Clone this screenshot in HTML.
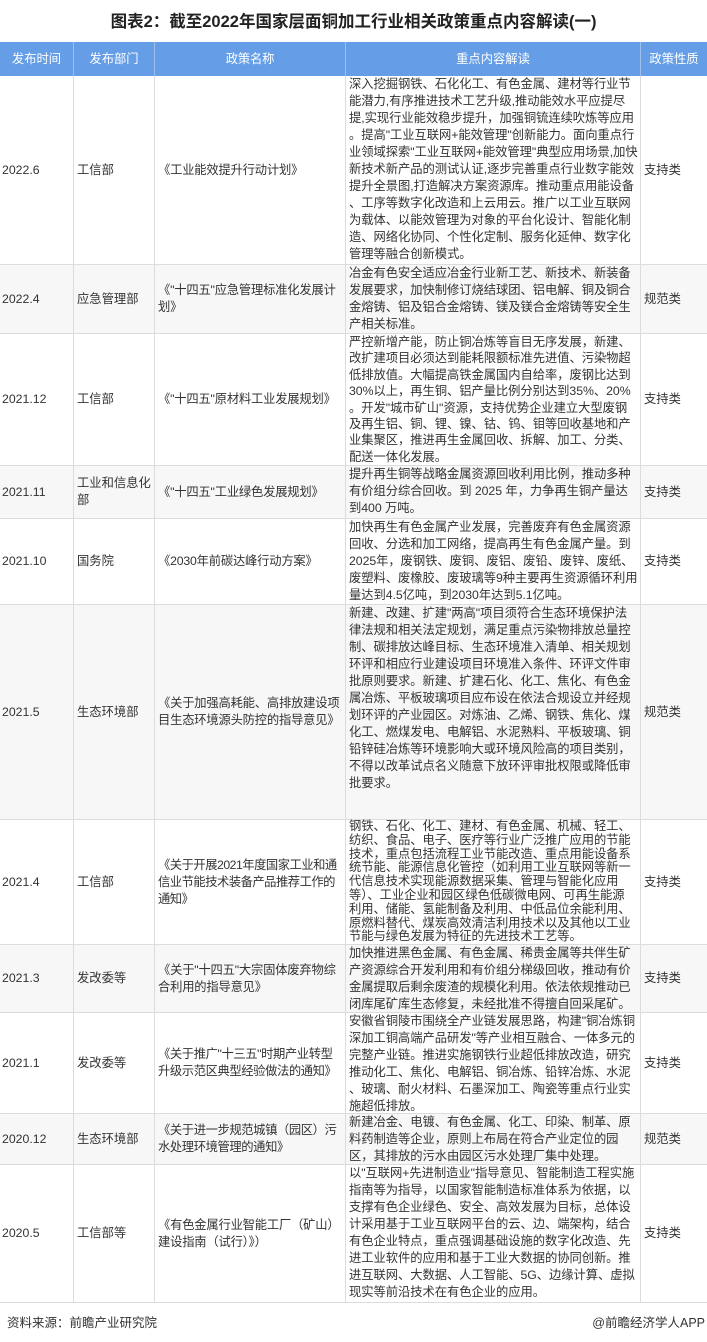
<!DOCTYPE html>
<html><head><meta charset="utf-8">
<style>
*{margin:0;padding:0;box-sizing:border-box}
body{width:707px;height:1342px;background:#fff;font-family:"Liberation Sans","Noto Sans CJK SC",sans-serif;color:#333;position:relative;overflow:hidden}
.title{position:absolute;top:8px;left:0;width:707px;text-align:center;font-size:16.5px;font-weight:bold;color:#222}
.row{position:absolute;left:0;width:707px;border-bottom:1px solid #dcdcdc}
.row.g{background:#f7f7f7}
.c{position:absolute;top:0;height:100%;border-left:1px solid #dcdcdc;display:flex;align-items:center;font-size:12.3px;line-height:17px;padding-left:3px}
.c.f{border-left:none;padding-left:2px}
.c3{white-space:nowrap;letter-spacing:-0.2px}
.c.t{align-items:flex-start;padding-top:0px;padding-left:3px;letter-spacing:-0.05px;white-space:nowrap}
.hd{background:#659ee6;color:#fff;font-size:12.5px;border-bottom:none}
.hd .c{justify-content:center;border-left:1px solid #9cc0f0;padding:0}
.hd .c.f{border-left:none}
.c1{left:0;width:73px}.c2{left:73px;width:81px}.c3{left:154px;width:191px}.c4{left:345px;width:295px}.c5{left:640px;width:67px}
.foot{position:absolute;top:1312px;font-size:12.5px;color:#333}
</style></head><body>
<div class="title">图表2：截至2022年国家层面铜加工行业相关政策重点内容解读(一)</div>
<div class="row hd" style="top:42px;height:34px">
<div class="c c1 f">发布时间</div><div class="c c2">发布部门</div><div class="c c3">政策名称</div><div class="c c4">重点内容解读</div><div class="c c5">政策性质</div>
</div>

<div class="row" style="top:76px;height:189px">
<div class="c c1 f">2022.6</div><div class="c c2">工信部</div><div class="c c3">《工业能效提升行动计划》</div>
<div class="c c4 t">深入挖掘钢铁、石化化工、有色金属、建材等行业节<br>能潜力,有序推进技术工艺升级,推动能效水平应提尽<br>提,实现行业能效稳步提升，加强铜锍连续吹炼等应用<br>。提高"工业互联网+能效管理"创新能力。面向重点行<br>业领域探索"工业互联网+能效管理"典型应用场景,加快<br>新技术新产品的测试认证,逐步完善重点行业数字能效<br>提升全景图,打造解决方案资源库。推动重点用能设备<br>、工序等数字化改造和上云用云。推广以工业互联网<br>为载体、以能效管理为对象的平台化设计、智能化制<br>造、网络化协同、个性化定制、服务化延伸、数字化<br>管理等融合创新模式。</div>
<div class="c c5">支持类</div></div>

<div class="row g" style="top:265px;height:69px">
<div class="c c1 f">2022.4</div><div class="c c2">应急管理部</div><div class="c c3">《"十四五"应急管理标准化发展计<br>划》</div>
<div class="c c4 t">冶金有色安全适应冶金行业新工艺、新技术、新装备<br>发展要求，加快制修订烧结球团、铝电解、铜及铜合<br>金熔铸、铝及铝合金熔铸、镁及镁合金熔铸等安全生<br>产相关标准。</div>
<div class="c c5">规范类</div></div>

<div class="row" style="top:334px;height:132px">
<div class="c c1 f">2021.12</div><div class="c c2">工信部</div><div class="c c3">《"十四五"原材料工业发展规划》</div>
<div class="c c4 t" style="line-height:16.4px">严控新增产能，防止铜冶炼等盲目无序发展，新建、<br>改扩建项目必须达到能耗限额标准先进值、污染物超<br>低排放值。大幅提高铁金属国内自给率，废钢比达到<br>30%以上，再生铜、铝产量比例分别达到35%、20%<br>。开发"城市矿山"资源，支持优势企业建立大型废钢<br>及再生铝、铜、锂、镍、钴、钨、钼等回收基地和产<br>业集聚区，推进再生金属回收、拆解、加工、分类、<br>配送一体化发展。</div>
<div class="c c5">支持类</div></div>

<div class="row g" style="top:466px;height:53px">
<div class="c c1 f">2021.11</div><div class="c c2">工业和信息化<br>部</div><div class="c c3">《"十四五"工业绿色发展规划》</div>
<div class="c c4 t">提升再生铜等战略金属资源回收利用比例，推动多种<br>有价组分综合回收。到 2025 年，力争再生铜产量达<br>到400 万吨。</div>
<div class="c c5">支持类</div></div>

<div class="row" style="top:519px;height:86px">
<div class="c c1 f">2021.10</div><div class="c c2">国务院</div><div class="c c3">《2030年前碳达峰行动方案》</div>
<div class="c c4 t">加快再生有色金属产业发展，完善废弃有色金属资源<br>回收、分选和加工网络，提高再生有色金属产量。到<br>2025年，废钢铁、废铜、废铝、废铅、废锌、废纸、<br>废塑料、废橡胶、废玻璃等9种主要再生资源循环利用<br>量达到4.5亿吨，到2030年达到5.1亿吨。</div>
<div class="c c5">支持类</div></div>

<div class="row g" style="top:605px;height:215px">
<div class="c c1 f">2021.5</div><div class="c c2">生态环境部</div><div class="c c3">《关于加强高耗能、高排放建设项<br>目生态环境源头防控的指导意见》</div>
<div class="c c4 t">新建、改建、扩建"两高"项目须符合生态环境保护法<br>律法规和相关法定规划，满足重点污染物排放总量控<br>制、碳排放达峰目标、生态环境准入清单、相关规划<br>环评和相应行业建设项目环境准入条件、环评文件审<br>批原则要求。新建、扩建石化、化工、焦化、有色金<br>属冶炼、平板玻璃项目应布设在依法合规设立并经规<br>划环评的产业园区。对炼油、乙烯、钢铁、焦化、煤<br>化工、燃煤发电、电解铝、水泥熟料、平板玻璃、铜<br>铅锌硅冶炼等环境影响大或环境风险高的项目类别，<br>不得以改革试点名义随意下放环评审批权限或降低审<br>批要求。</div>
<div class="c c5">规范类</div></div>

<div class="row" style="top:820px;height:125px">
<div class="c c1 f">2021.4</div><div class="c c2">工信部</div><div class="c c3" style="letter-spacing:-0.5px">《关于开展2021年度国家工业和通<br>信业节能技术装备产品推荐工作的<br>通知》</div>
<div class="c c4 t" style="line-height:13.8px">钢铁、石化、化工、建材、有色金属、机械、轻工、<br>纺织、食品、电子、医疗等行业广泛推广应用的节能<br>技术，重点包括流程工业节能改造、重点用能设备系<br>统节能、能源信息化管控（如利用工业互联网等新一<br>代信息技术实现能源数据采集、管理与智能化应用<br>等）、工业企业和园区绿色低碳微电网、可再生能源<br>利用、储能、氢能制备及利用、中低品位余能利用、<br>原燃料替代、煤炭高效清洁利用技术以及其他以工业<br>节能与绿色发展为特征的先进技术工艺等。</div>
<div class="c c5">支持类</div></div>

<div class="row g" style="top:945px;height:68px">
<div class="c c1 f">2021.3</div><div class="c c2">发改委等</div><div class="c c3">《关于"十四五"大宗固体废弃物综<br>合利用的指导意见》</div>
<div class="c c4 t">加快推进黑色金属、有色金属、稀贵金属等共伴生矿<br>产资源综合开发利用和有价组分梯级回收，推动有价<br>金属提取后剩余废渣的规模化利用。依法依规推动已<br>闭库尾矿库生态修复，未经批准不得擅自回采尾矿。</div>
<div class="c c5">支持类</div></div>

<div class="row" style="top:1013px;height:101px">
<div class="c c1 f">2021.1</div><div class="c c2">发改委等</div><div class="c c3" style="letter-spacing:-0.4px">《关于推广"十三五"时期产业转型<br>升级示范区典型经验做法的通知》</div>
<div class="c c4 t">安徽省铜陵市围绕全产业链发展思路，构建"铜冶炼铜<br>深加工铜高端产品研发"等产业相互融合、一体多元的<br>完整产业链。推进实施钢铁行业超低排放改造，研究<br>推动化工、焦化、电解铝、铜冶炼、铅锌冶炼、水泥<br>、玻璃、耐火材料、石墨深加工、陶瓷等重点行业实<br>施超低排放。</div>
<div class="c c5">支持类</div></div>

<div class="row g" style="top:1114px;height:51px">
<div class="c c1 f">2020.12</div><div class="c c2">生态环境部</div><div class="c c3" style="letter-spacing:-0.4px">《关于进一步规范城镇（园区）污<br>水处理环境管理的通知》</div>
<div class="c c4 t">新建冶金、电镀、有色金属、化工、印染、制革、原<br>料药制造等企业，原则上布局在符合产业定位的园<br>区，其排放的污水由园区污水处理厂集中处理。</div>
<div class="c c5">规范类</div></div>

<div class="row" style="top:1165px;height:138px">
<div class="c c1 f">2020.5</div><div class="c c2">工信部等</div><div class="c c3">《有色金属行业智能工厂（矿山）<br>建设指南（试行）》）</div>
<div class="c c4 t">以"互联网+先进制造业"指导意见、智能制造工程实施<br>指南等为指导，以国家智能制造标准体系为依据，以<br>支撑有色企业绿色、安全、高效发展为目标，总体设<br>计采用基于工业互联网平台的云、边、端架构，结合<br>有色企业特点，重点强调基础设施的数字化改造、先<br>进工业软件的应用和基于工业大数据的协同创新。推<br>进互联网、大数据、人工智能、5G、边缘计算、虚拟<br>现实等前沿技术在有色企业的应用。</div>
<div class="c c5">支持类</div></div>

<div class="foot" style="left:7px">资料来源：前瞻产业研究院</div>
<div class="foot" style="right:2px">@前瞻经济学人APP</div>
</body></html>
